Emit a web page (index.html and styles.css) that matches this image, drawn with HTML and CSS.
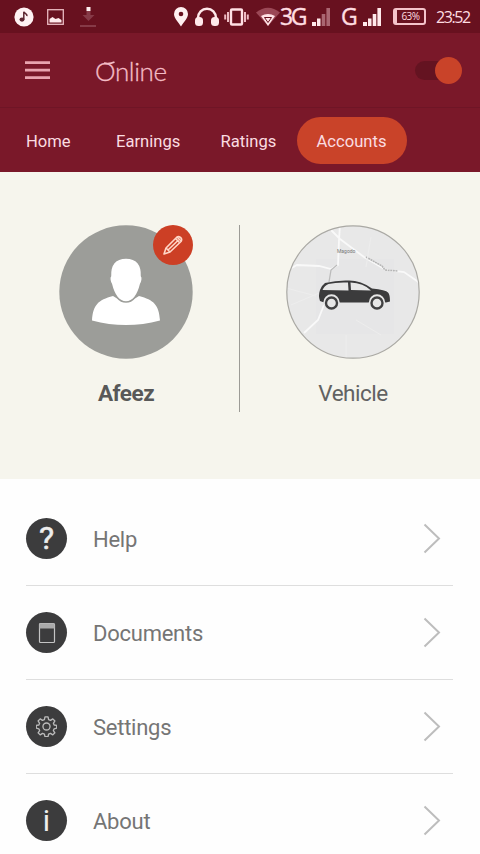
FILE: index.html
```html
<!DOCTYPE html>
<html lang="en">
<head>
<meta charset="utf-8">
<title>Accounts</title>
<link rel="stylesheet" href="styles.css">
</head>
<body>
<div class="status">
  <svg class="music" width="20" height="20" viewBox="0 0 20 20"><circle cx="10" cy="10" r="9.6" fill="#fff2f3"/><ellipse cx="8" cy="12.6" rx="2.5" ry="2.1" fill="#5d2530"/><path d="M9.8 12.5V4.8c.5 1.800 3.500 1.700 3.200 4.400" fill="none" stroke="#5d2530" stroke-width="1.500"/></svg>
  <svg class="photo" width="17" height="16" viewBox="0 0 17 16"><rect x=".7" y=".7" width="15.600" height="14.600" fill="none" stroke="#e8b9c0" stroke-width="1.300"/><path d="M2.500 13.500V10l3-2 3 2 3-1 3 2v2.500z" fill="#ffeaec"/></svg>
  <svg class="download" width="17" height="22" viewBox="0 0 17 22"><path d="M6.500 5h4v4h4l-6 6-6-6h4zM0 19h16v2H0z" fill="#863a47"/><path d="M6.500 1h4v4h-4z" fill="#fff0f1"/></svg>
  <svg class="pin" width="16" height="20" viewBox="0 0 16 20"><path d="M8 19.500C5 14.500 1 11 1 7a7 7 0 0 1 14 0c0 4-4 7.500-7 12.500z" fill="#fff0f1"/><circle cx="8" cy="7" r="2.300" fill="#68111f"/></svg>
  <svg class="phones" width="24" height="20" viewBox="0 0 24 20"><path d="M3 14v-3a9 9.300 0 0 1 18 0v3" fill="none" stroke="#ffe9eb" stroke-width="2.400"/><rect x="0" y="10" width="8" height="9" rx="3.500" fill="#ffe9eb"/><rect x="16" y="10" width="8" height="9" rx="3.500" fill="#ffe9eb"/></svg>
  <svg class="vibrate" width="25" height="20" viewBox="0 0 25 20"><rect x="7" y="2.500" width="11" height="15" rx="1" fill="none" stroke="#ffe0e4" stroke-width="2.400"/><path d="M4 5v10M21 5v10M1.200 7.500v5M23.800 7.500v5" stroke="#eebac2" stroke-width="2"/></svg>
  <svg class="wifi" width="24" height="20" viewBox="0 0 24 20"><path d="M0 5.500Q12-4 24 5.500L12 19z" fill="#9b4856"/><path d="M5 9q7-4 14 0l-7 10z" fill="#ffe3e6"/><path d="M8.500 10.500h7l-3.500 5z" fill="none" stroke="#68111f" stroke-width="1"/></svg>
  <span class="net g3">3G</span>
  <svg class="sig1" width="18" height="18" viewBox="0 0 18 18"><path d="M0 14h4v4H0zM5 10.500h3.500V18H5z" fill="#ffe9eb"/><path d="M9.700 6h3.600v12H9.700zM14.400 0H18v18h-3.600z" fill="#aa6671"/></svg>
  <span class="net g">G</span>
  <svg class="sig2" width="18" height="18" viewBox="0 0 18 18"><path d="M0 14h4v4H0zM5 10.500h3.500V18H5zM9.700 6h3.600v12H9.700zM14.400 0H18v18h-3.600z" fill="#ffe9eb"/></svg>
  <span class="battery">63%</span>
  <span class="clock">23:52</span>
</div>
<header class="bar">
  <svg class="menu" width="25" height="19" viewBox="0 0 25 19"><path d="M0 1.700h25M0 9.200h25M0 16.700h25" stroke="#e9a4af" stroke-width="2.700"/></svg>
  <h1 class="title">Online<svg class="tail" width="12" height="6" viewBox="0 0 12 6"><path d="M0 2.200Q6 3.200 10.500 1" fill="none" stroke="#f3bcc5" stroke-width="1.700"/></svg></h1>
  <div class="toggle"><i class="knob"></i></div>
</header>
<nav class="tabs">
  <a class="tab">Home</a><a class="tab">Earnings</a><a class="tab">Ratings</a><a class="tab active">Accounts</a>
</nav>
<section class="profile">
  <div class="card">
    <div class="avatar">
      <svg width="134" height="134" viewBox="0 0 134 134"><circle cx="67" cy="67" r="66.700" fill="#9c9d99"/><path d="M33 95.500C34 80 39 75 54 71q13 9 26 0c15 4 20 9 21 24.500q-34 9-68 0z" fill="#fff"/><path d="M67 33c-11 0-16 7-15.500 18-1.500 1.500-.5 6 .8 8C55 70 60 77 67 77s12-7 14.700-18c1.300-2 2.300-6.500.8-8C83 40 78 33 67 33z" fill="#fff" stroke="#9c9d99" stroke-width="1.500"/></svg>
      <span class="edit"><svg width="20" height="20" viewBox="0 0 20 20"><g fill="none" stroke="#ffd7c8" stroke-width="1.600" stroke-linejoin="round"><path d="M1 19l2-6L14 2q1.500-1 3.500 .5t.5 4L7 17z"/><path d="M3 13l4 4M5 15L15.500 5M12.500 3.500l4 4M14 2l4 4"/></g></svg></span>
    </div>
    <div class="name strong">Afeez</div>
  </div>
  <div class="divider"></div>
  <div class="card">
    <svg class="vehicle" width="134" height="134" viewBox="0 0 134 134">
      <defs><clipPath id="disc"><circle cx="67" cy="67" r="66"/></clipPath></defs>
      <circle cx="67" cy="67" r="66.300" fill="#e8e8e8"/>
      <g clip-path="url(#disc)" fill="none">
        <path d="M30 34h78v75H30z" fill="#e6e6e7"/>
        <path d="M54 0l-1 15-1 25-7 4-12-3-22-1-9 5M54 14l24 18 22 13 18 2 16 11M38 80l-6 15-14 13M45 5l9 9" stroke="#f9f9f9" stroke-width="1.800"/>
        <path d="M51 40l-6 5-2 12" stroke="#bbb" stroke-width="1.300"/>
        <path d="M80 32l16 9 3 4 13 1" stroke="#b5b5b5" stroke-width="1.600" stroke-dasharray="2 .6"/>
        <path d="M5 80l28-12M70 95l25 15M60 110v24M85 12l-5 30M0 63l30 8" stroke="#ededed" stroke-width="1"/>
      </g>
      <text x="51" y="27.500" class="place">Magodo</text>
      <circle cx="67" cy="67" r="66.200" fill="none" stroke="#aaa9a4" stroke-width="1.200"/>
      <path d="M34 76q-2-5 0-11 1-4 5-7 12-3 24-2.500 12 0 23 8 14 1.500 16 4 2 2 2 9l-4 1H38z" fill="#3b3b3c"/>
      <path d="M36.500 65q2-4.500 6-6 8-2 19.500-1.500l.5 8zM64.500 57.500q13 .5 20.500 8l-20-.5z" fill="#e7e7e7"/>
      <circle cx="45.500" cy="77.500" r="8.200" fill="#e7e7e7"/><circle cx="91" cy="77.500" r="8.200" fill="#e7e7e7"/>
      <circle cx="45.500" cy="78" r="5.500" fill="#e7e7e7" stroke="#414142" stroke-width="2.400"/><circle cx="91" cy="78" r="5.500" fill="#e7e7e7" stroke="#414142" stroke-width="2.400"/>
    </svg>
    <div class="name">Vehicle</div>
  </div>
</section>
<ul class="list">
  <li class="row"><span class="icon question">?</span><span class="label">Help</span><svg class="chev" width="18" height="31" viewBox="0 0 18 31"><path d="M1.500 1.500L16 15.500 1.500 29.500"/></svg></li>
  <li class="row"><span class="icon"><svg width="18" height="22" viewBox="0 0 18 22"><rect x="1.500" y="1.500" width="15" height="19" rx="1" fill="none" stroke="#c4c4c4" stroke-width="1.200"/><path d="M1.500 1.500h15V6.500h-15z" fill="#aaa"/></svg></span><span class="label">Documents</span><svg class="chev" width="18" height="31" viewBox="0 0 18 31"><path d="M1.500 1.500L16 15.500 1.500 29.500"/></svg></li>
  <li class="row"><span class="icon"><svg width="21" height="21" viewBox="-11 -11 22 22"><g fill="none" stroke="#bbb" stroke-width="1.400" stroke-linejoin="round"><path d="M-1.600-10h3.200l.6 2.800 2 .8 2.400-1.600 2.200 2.200-1.600 2.400.8 1.800 2.700.5v2.900l-2.700.6-.8 1.900 1.600 2.300-2.200 2.200-2.400-1.600-2 .8-.6 2.700h-3.200l-.6-2.700-2-.8-2.400 1.600-2.200-2.200 1.600-2.300-.8-1.900-2.700-.6v-2.900l2.700-.5.8-1.800-1.600-2.400 2.200-2.200 2.400 1.600 2-.8z"/><circle r="3.700"/></g></svg></span><span class="label">Settings</span><svg class="chev" width="18" height="31" viewBox="0 0 18 31"><path d="M1.500 1.500L16 15.500 1.500 29.500"/></svg></li>
  <li class="row"><span class="icon info">i</span><span class="label">About</span><svg class="chev" width="18" height="31" viewBox="0 0 18 31"><path d="M1.500 1.500L16 15.500 1.500 29.500"/></svg></li>
</ul>
</body>
</html>
```
FILE: styles.css
```css
* { box-sizing: border-box; }
html, body { margin: 0; height: 854px; overflow: hidden; }
body { background: #fefefe; font-family: Roboto, "Liberation Sans", sans-serif; color: #676767; }
svg { display: block; flex: none; }

.status { height: 33px; display: flex; align-items: center; padding-left: 14px; background: #68111f; color: #ffdde1; }
.photo { margin-left: 13px; }
.download { margin-left: 16px; margin-top: 1px; }
.pin { margin-left: 76px; }
.phones { margin-left: 6px; }
.vibrate { margin-left: 5px; }
.wifi { margin-left: 7px; }
.net { font: 400 23px/33px "Open Sans", sans-serif; flex: none; -webkit-text-stroke: 0.4px currentColor; }
.g3 { width: 32px; letter-spacing: -2.5px; }
.g { width: 22px; margin-left: 11px; }
.battery { flex: none; width: 33px; height: 17px; margin-left: 12px; border: 2px solid #f4c3ca; border-left-width: 4px; border-radius: 3px; font: 10px/13px "Open Sans", sans-serif; letter-spacing: -0.5px; text-align: center; }
.clock { flex: none; margin-left: 10px; font: 400 16px/33px "Open Sans", sans-serif; letter-spacing: -1.4px; padding-top: 2px; }

.bar { height: 74px; display: flex; align-items: center; padding: 0 18px 0 25px; background: #7a1829; }
.title { position: relative; margin: 1px 0 0 45px; font: 300 26px/40px Lato, sans-serif; letter-spacing: -0.4px; color: #f3bcc5; -webkit-text-stroke: 0.3px currentColor; }
.tail { position: absolute; left: 9px; top: 10px; }
.toggle { width: 47px; height: 27px; margin-left: auto; position: relative; display: flex; align-items: center; justify-content: flex-end; }
.toggle::before { content: ""; position: absolute; left: 0; top: 4px; width: 40px; height: 19px; border-radius: 10px; background: #641321; }
.knob { position: relative; width: 27px; height: 27px; border-radius: 50%; background: #c94329; }

.tabs { height: 65px; display: flex; align-items: center; padding-left: 26px; background: #7a1829; border-top: 1px solid #6f1526; }
.tab { flex: none; height: 47px; font-size: 16.6px; line-height: 49px; color: #fbdde1; margin-right: 45px; }
.tab:nth-child(1) { width: 45px; }
.tab:nth-child(2) { width: 65px; margin-right: 39.5px; }
.tab:nth-child(3) { width: 56px; margin-right: 20px; }
.tab.active { width: 110px; margin: 0; border-radius: 24px; background: #c94329; text-align: center; }

.profile { height: 307px; display: flex; justify-content: space-between; padding: 53px 60px 0 59px; background: #f6f5ed; }
.card { width: 134px; }
.avatar { position: relative; }
.edit { position: absolute; right: 0; top: 0; width: 40px; height: 40px; border-radius: 50%; background: #cc3f25; display: flex; align-items: center; justify-content: center; }
.name { margin-top: 19px; text-align: center; font-size: 22.5px; line-height: 30px; letter-spacing: -0.5px; color: #626262; }
.strong { font-weight: 700; color: #585858; }
.divider { width: 1px; height: 187px; background: #9c9b96; }
.place { font: 5px Roboto, sans-serif; fill: #777; }

.list { list-style: none; margin: 0; padding: 13px 27px 0 26px; }
.row { height: 94px; display: flex; align-items: center; border-bottom: 1px solid #dedede; }
.icon { width: 41px; height: 41px; border-radius: 50%; background: #3c3c3d; color: #eee; display: flex; align-items: center; justify-content: center; }
.question { font-size: 32px; line-height: 41px; -webkit-text-stroke: 0.5px currentColor; }
.info { font-size: 30px; line-height: 41px; }
.label { margin: 3px 0 0 26px; font-size: 22px; line-height: 30px; letter-spacing: -0.25px; color: #757575; }
.chev { margin-left: auto; margin-right: 12px; fill: none; stroke: #bdbdbd; stroke-width: 2; }
```
